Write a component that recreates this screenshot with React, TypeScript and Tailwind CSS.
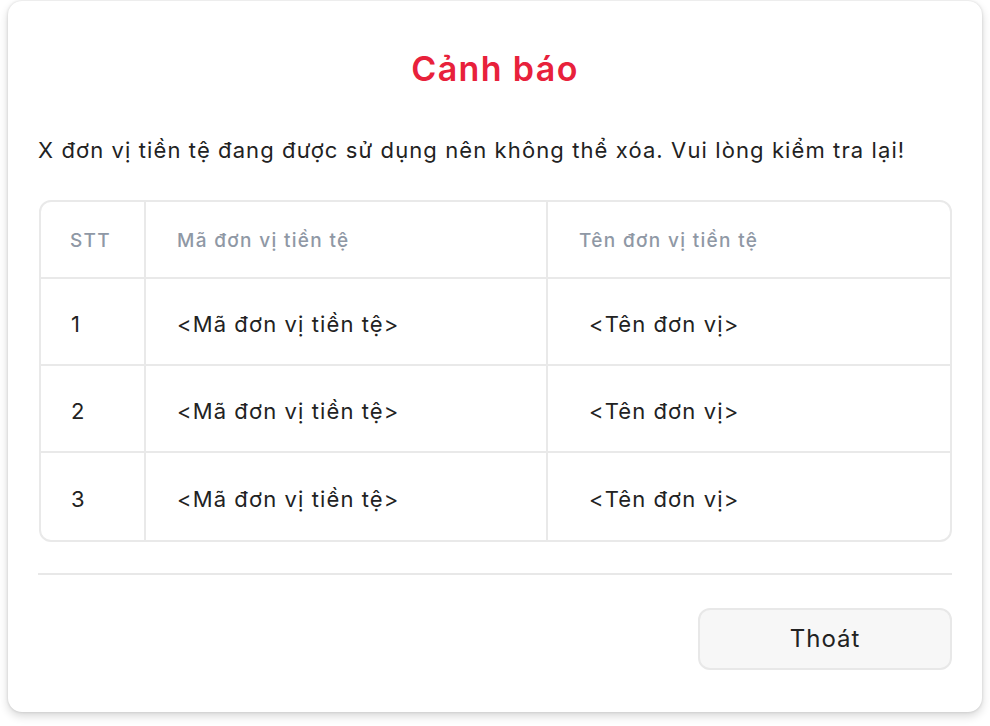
import React from 'react';

const rows = [
  { stt: '1', code: '<Mã đơn vị tiền tệ>', name: '<Tên đơn vị>' },
  { stt: '2', code: '<Mã đơn vị tiền tệ>', name: '<Tên đơn vị>' },
  { stt: '3', code: '<Mã đơn vị tiền tệ>', name: '<Tên đơn vị>' },
];

const App: React.FC = () => {
  return (
    <div className="w-[990px] h-[726px] bg-white overflow-hidden font-['Inter','Noto_Sans',sans-serif]">
      <div className="ml-[8px] mt-[1px] w-[974px] h-[711px] bg-white rounded-[14px] shadow-[0_4px_10px_rgba(0,0,0,0.16),0_0_3px_rgba(0,0,0,0.14)] px-[30px] pt-[44px] flex flex-col">
        {/* Title */}
        <h1 className="text-center text-[34px] leading-[48px] font-semibold tracking-[0.04em] text-[#e8213b]">Cảnh báo</h1>

        {/* Message */}
        <p className="mt-[42px] text-[22px] leading-[30px] tracking-[0.05em] text-[#222] whitespace-nowrap">
          X đơn vị tiền tệ đang được sử dụng nên không thể xóa. Vui lòng kiểm tra lại!
        </p>

        {/* Table */}
        <div className="mt-[35px] ml-[1px] border-2 border-[#e9e9e9] rounded-[12px] overflow-hidden">
          <div className="grid grid-cols-[105px_402px_1fr] h-[77px] pt-[3px] border-b-2 border-[#e9e9e9] text-[19px] font-medium tracking-[0.07em] text-[#8f98a5]">
            <div className="flex items-center pl-[29px] border-r-2 border-[#e9e9e9] -mt-[3px] pt-[3px]">STT</div>
            <div className="flex items-center pl-[31px] border-r-2 border-[#e9e9e9] -mt-[3px] pt-[3px]">Mã đơn vị tiền tệ</div>
            <div className="flex items-center pl-[31px]">Tên đơn vị tiền tệ</div>
          </div>
          {rows.map((r, i) => (
            <div
              key={r.stt}
              className={`grid grid-cols-[105px_402px_1fr] h-[87px] text-[22px] tracking-[0.05em] text-[#222] ${
                i < rows.length - 1 ? 'border-b-2 border-[#e9e9e9]' : ''
              }`}
            >
              <div className="flex items-center pl-[30px] pt-[5px] border-r-2 border-[#e9e9e9]">{r.stt}</div>
              <div className="flex items-center pl-[31px] pt-[5px] border-r-2 border-[#e9e9e9]">{r.code}</div>
              <div className="flex items-center pl-[41px] pt-[5px]">{r.name}</div>
            </div>
          ))}
        </div>

        {/* Divider */}
        <div className="mt-[31px] h-[2px] bg-[#e8e8e8]" />

        {/* Footer */}
        <div className="mt-[33px] flex justify-end">
          <button className="w-[254px] h-[62px] rounded-[12px] border-2 border-[#e8e8e8] bg-[#f7f7f7] text-[24px] tracking-[0.04em] text-[#222]">
            Thoát
          </button>
        </div>
      </div>
    </div>
  );
};

export default App;
